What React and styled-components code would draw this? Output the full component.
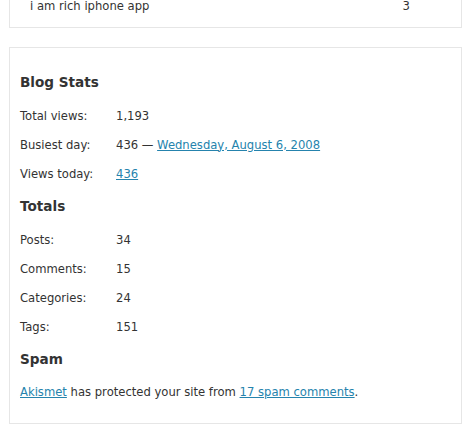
import { Fragment } from "react";
import styled, { createGlobalStyle } from "styled-components";

const GlobalStyle = createGlobalStyle`
  html, body { margin: 0; padding: 0; background: #fff; }
  body {
    font-family: "DejaVu Sans", "Liberation Sans", sans-serif;
    font-size: 11.6px;
    color: #333;
    overflow: hidden;
  }
`;

const Page = styled.div`
  padding: 0 3px 0 9px;
  display: flex;
  flex-direction: column;
  gap: 19px;
`;

const Widget = styled.div`
  border: 1px solid #e6e6e6;
  padding: ${({ $cut }) => ($cut ? "0 10px 13px 20px" : "16px 10px 16px 10px")};
  margin-top: ${({ $cut }) => ($cut ? "-2px" : "0")};
`;

const TopRow = styled.div`
  display: flex;
  justify-content: space-between;
  line-height: 15px;
  padding-right: 41px;
`;

const Heading = styled.h2`
  margin: 0;
  font-size: 13.6px;
  font-weight: bold;
  line-height: 37px;
  color: #333;
`;

const StatList = styled.div`
  display: grid;
  grid-template-columns: 96px auto;
  grid-auto-rows: 29px;
  align-items: center;
`;

const Label = styled.span``;
const Value = styled.span``;

const Link = styled.a`
  color: #2583ad;
  text-decoration: underline;
`;

const Text = styled.p`
  margin: 0;
  line-height: 29px;
`;

const stats = [
  ["Total views:", "1,193"],
  ["Busiest day:", <>436 — <Link href="#">Wednesday, August 6, 2008</Link></>],
  ["Views today:", <Link href="#">436</Link>],
];

const totals = [
  ["Posts:", "34"],
  ["Comments:", "15"],
  ["Categories:", "24"],
  ["Tags:", "151"],
];

const Stats = ({ rows }) => (
  <StatList>
    {rows.map(([label, value]) => (
      <Fragment key={label}>
        <Label>{label}</Label>
        <Value>{value}</Value>
      </Fragment>
    ))}
  </StatList>
);

export default function App() {
  return (
    <>
      <GlobalStyle />
      <Page>
        <Widget $cut>
          <TopRow>
            <span>i am rich iphone app</span>
            <span>3</span>
          </TopRow>
        </Widget>
        <Widget>
          <Heading>Blog Stats</Heading>
          <Stats rows={stats} />
          <Heading>Totals</Heading>
          <Stats rows={totals} />
          <Heading>Spam</Heading>
          <Text>
            <Link href="#">Akismet</Link> has protected your site from{" "}
            <Link href="#">17 spam comments</Link>.
          </Text>
        </Widget>
      </Page>
    </>
  );
}
